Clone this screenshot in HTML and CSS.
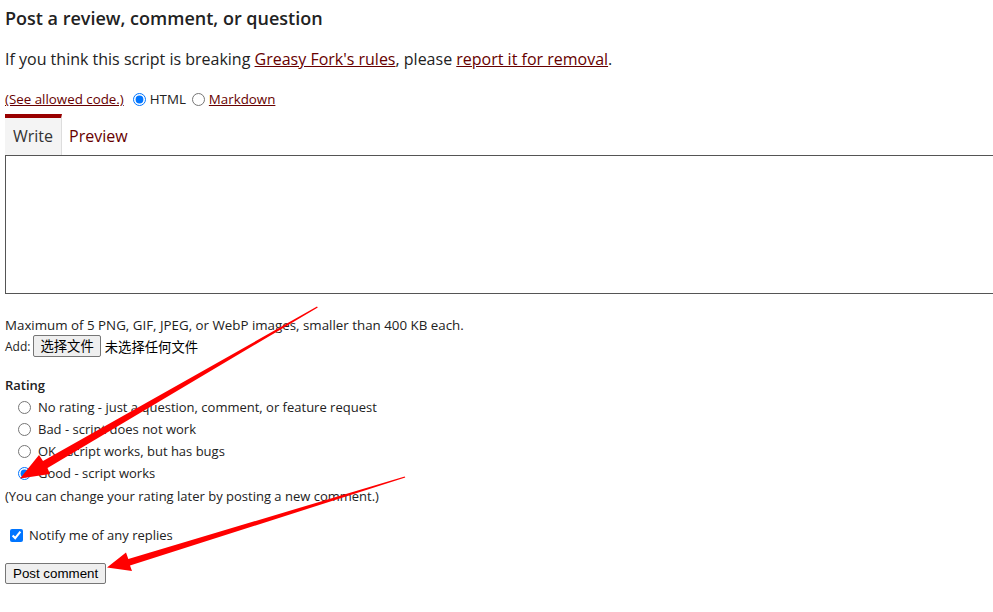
FILE: index.html
```html
<!DOCTYPE html>
<html lang="en">
<head>
<meta charset="utf-8">
<title>Post a review</title>
<link rel="stylesheet" href="styles.css">
</head>
<body>
<div class="page">
  <h3 class="title">Post a review, comment, or question</h3>
  <p class="intro">If you think this script is breaking <a href="#">Greasy Fork's rules</a>, please <a href="#">report it for removal</a>.</p>

  <div class="markup">
    <a href="#">(See allowed code.)</a>
    <label class="opt"><input type="radio" name="markup" checked>HTML</label>
    <label class="opt"><input type="radio" name="markup"><a href="#">Markdown</a></label>
  </div>

  <div class="tabs">
    <span class="tab current">Write</span>
    <span class="tab link">Preview</span>
  </div>
  <textarea class="editor"></textarea>

  <div class="attach">
    <div class="limit">Maximum of 5 PNG, GIF, JPEG, or WebP images, smaller than 400 KB each.</div>
    <div class="add"><span class="add-label">Add:</span> <span class="file-btn">选择文件</span><span class="file-none">未选择任何文件</span></div>
  </div>

  <div class="rating">
    <div class="rating-title">Rating</div>
    <div class="rating-list">
      <label class="rate"><input type="radio" name="rating">No rating - just a question, comment, or feature request</label>
      <label class="rate"><input type="radio" name="rating">Bad - script does not work</label>
      <label class="rate"><input type="radio" name="rating">OK - script works, but has bugs</label>
      <label class="rate"><input type="radio" name="rating" checked>Good - script works</label>
    </div>
    <div class="note">(You can change your rating later by posting a new comment.)</div>
  </div>

  <label class="notify"><input type="checkbox" checked>Notify me of any replies</label>

  <div class="submit"><button type="button" class="post">Post comment</button></div>
</div>

<svg class="arrows" width="993" height="612" viewBox="0 0 993 612" aria-hidden="true">
  <polygon fill="#ff0000" points="317,306.6 317.8,307.4 47.5,468 50,474 20,478.5 39,455 43,461"/>
  <polygon fill="#ff0000" points="404.7,476.4 405.3,477.6 130,565.5 132,571 107,567.5 126,552.5 128.3,559"/>
</svg>
</body>
</html>
```

FILE: styles.css
```css
html, body {
  margin: 0;
  padding: 0;
  background: #ffffff;
}

body {
  font-family: "Open Sans", "Noto Sans CJK SC", sans-serif;
  color: #222222;
  overflow: hidden;
}

.page {
  padding: 0 0 0 5px;
}

a {
  color: #670000;
  text-decoration: underline;
}

.title {
  margin: 0;
  padding-top: 5px;
  font-size: 18px;
  font-weight: 600;
  line-height: 26px;
}

.intro {
  margin: 16px 0 0;
  font-size: 16px;
  line-height: 24px;
}

.markup {
  margin-top: 19px;
  font-size: 13.33px;
  line-height: 18px;
  display: flex;
  align-items: center;
}

.markup .opt {
  display: inline-flex;
  align-items: center;
}

.markup input {
  margin: 0 4px 0 9px;
  width: 13px;
  height: 13px;
}

.markup .opt + .opt input {
  margin-left: 6px;
}

.tabs {
  margin-top: 6px;
  display: flex;
  font-size: 16px;
  line-height: 24px;
}

.tab {
  padding: 6px 8px 7px;
}

.tab.current {
  border-top: 4px solid #990000;
  background: #f4f4f4;
  border-right: 1px solid #dddddd;
  color: #333333;
}

.tab.link {
  margin-top: 4px;
  padding-left: 7px;
  color: #670000;
}

.editor {
  display: block;
  box-sizing: border-box;
  width: 100%;
  height: 139px;
  margin: 0;
  border: 1px solid #555555;
  border-right: none;
  resize: none;
  background: #ffffff;
}

.attach {
  margin-top: 22px;
  font-size: 13px;
  line-height: 19px;
}

.limit {
  font-size: 13.33px;
}

.add {
  display: flex;
  align-items: center;
  height: 22px;
}

.add-label {
  font-size: 12px;
}

.file-btn {
  font-family: "Noto Sans CJK SC", sans-serif;
  font-size: 13.33px;
  line-height: 16px;
  margin-left: 3px;
  padding: 2px 6px;
  border: 1px solid #767676;
  border-radius: 2px;
  background: #efefef;
  color: #000000;
}

.file-none {
  font-family: "Noto Sans CJK SC", sans-serif;
  font-size: 13.33px;
  margin-left: 4px;
  color: #000000;
}

.rating {
  margin-top: 18px;
  font-size: 13px;
}

.rating-title {
  font-weight: 600;
  line-height: 20px;
}

.rating-list {
  display: flex;
  flex-direction: column;
  padding-top: 1px;
  padding-left: 13px;
}

.rate {
  display: flex;
  align-items: center;
  height: 22px;
  line-height: 22px;
}

.rate input {
  margin: 0 7px 0 0;
  width: 13px;
  height: 13px;
}

.note {
  line-height: 24px;
}

.notify {
  display: flex;
  align-items: center;
  margin-top: 17px;
  padding-left: 5px;
  font-size: 13px;
  line-height: 20px;
}

.notify input {
  margin: 0 6px 0 0;
  width: 13px;
  height: 13px;
}

.submit {
  margin-top: 16px;
}

.post {
  font-family: "Liberation Sans", Arial, sans-serif;
  font-size: 13.33px;
  color: #000000;
  padding: 1px 7px;
  height: 21px;
  border: 1px solid #767676;
  border-radius: 2px;
  background: #efefef;
  margin: 0;
}

.arrows {
  position: absolute;
  left: 0;
  top: 0;
  pointer-events: none;
}
```
